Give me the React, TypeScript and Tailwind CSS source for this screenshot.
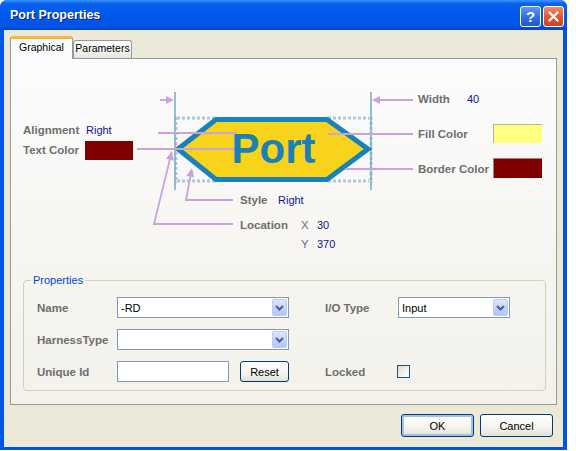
import React from "react";

function Chevron() {
  return (
    <svg width="9" height="6" viewBox="0 0 9 6">
      <path d="M1 1 L4.5 4.5 L8 1" fill="none" stroke="#4D6185" strokeWidth="2" />
    </svg>
  );
}

function Combo({ value, w }: { value: string; w: string }) {
  return (
    <div className={`${w} h-[21px] border border-[#7F9DB9] bg-white flex items-center`}>
      <span className="flex-1 pl-[3px] text-[11px] leading-[14px] text-black">{value}</span>
      <div className="w-[15px] h-[17px] mr-[1px] rounded-[2px] border border-[#B9CCF3] bg-[linear-gradient(180deg,#DCE6FC_0%,#C3D3FB_50%,#B3C7F5_100%)] flex items-center justify-center">
        <Chevron />
      </div>
    </div>
  );
}

const lab = "absolute leading-[14px] text-[11.5px] font-bold text-[#6E6E6E] whitespace-nowrap";
const val = "absolute leading-[14px] text-[11px] text-[#14148A] whitespace-nowrap";

export default function App() {
  const pink = "#C9A3DB";
  return (
    <div className="w-[576px] h-[451px] bg-white font-['Liberation_Sans',Arial,sans-serif]">
      <div className="w-[567px] h-[450px] rounded-t-[7px] bg-[#0055E5] flex flex-col overflow-hidden">
        {/* Title bar */}
        <div className="h-[30px] flex items-center pl-[10px] pr-[3px] bg-[linear-gradient(180deg,#3D95FF_0%,#0A62EC_12%,#0058EE_45%,#0055E5_85%,#0046D2_100%)]">
          <span className="text-white font-bold text-[12.5px] leading-[16px] [text-shadow:1px_1px_0_#0A1883]">
            Port Properties
          </span>
          <div className="ml-auto flex gap-[2px] mt-[2px]">
            <div className="w-[21px] h-[21px] rounded-[3px] border border-white bg-[linear-gradient(180deg,#5B97F7_0%,#2D69E6_60%,#2058D8_100%)] flex items-center justify-center text-white font-bold text-[15px] leading-none">
              ?
            </div>
            <div className="w-[21px] h-[21px] rounded-[3px] border border-white bg-[linear-gradient(180deg,#EE8A66_0%,#E0552F_55%,#CE4422_100%)] flex items-center justify-center">
              <svg width="11" height="11" viewBox="0 0 11 11">
                <path d="M1.5 1.5 L9.5 9.5 M9.5 1.5 L1.5 9.5" stroke="white" strokeWidth="2.2" strokeLinecap="round" />
              </svg>
            </div>
          </div>
        </div>

        {/* Client */}
        <div className="flex-1 mx-[4px] mb-[3px] bg-[#ECE9D8] flex flex-col">
          {/* Tabs */}
          <div className="mt-[6px] pl-[6px] h-[22px] flex items-end">
            <div className="relative z-10 w-[63px] h-[23px] -mb-px rounded-t-[3px] border-x border-[#919B9C] border-t-[3px] border-t-[#F9B83A] bg-[#FCFCFE] flex justify-center pt-[1px]">
              <span className="text-[10.5px] leading-[14px] text-black">Graphical</span>
            </div>
            <div className="w-[59px] h-[18px] rounded-t-[3px] border border-b-0 border-[#919B9C] bg-[linear-gradient(180deg,#FFFFFF_0%,#F3F2EC_60%,#E6E4DB_100%)] flex justify-center">
              <span className="text-[10.5px] leading-[14px] text-black">Parameters</span>
            </div>
          </div>

          {/* Panel */}
          <div className="ml-[6px] w-[547px] h-[347px] border border-[#919B9C] bg-[linear-gradient(180deg,#FCFCFE_0%,#F7F6F2_50%,#F3F1EA_100%)]">
            {/* Diagram */}
            <div className="relative h-[214px]">
              <svg className="absolute left-0 top-0" width="545" height="214" viewBox="11 59 545 214">
                {/* dotted bounding */}
                <g stroke="#AEC8DC" strokeWidth="3" strokeDasharray="3 2" fill="none">
                  <line x1="177" y1="118" x2="216" y2="118" />
                  <line x1="328" y1="118" x2="369" y2="118" />
                  <line x1="177" y1="181" x2="216" y2="181" />
                  <line x1="328" y1="181" x2="369" y2="181" />
                  <line x1="176" y1="117" x2="176" y2="183" />
                  <line x1="371" y1="117" x2="371" y2="183" />
                </g>
                {/* vertical lines */}
                <line x1="175" y1="92" x2="175" y2="190" stroke="#7DAFC6" strokeWidth="1.6" />
                <line x1="371" y1="92" x2="371" y2="190" stroke="#7DAFC6" strokeWidth="1.6" />
                {/* hexagon */}
                <polygon
                  points="178,149 216,119.5 327,119.5 368,149 327,179.5 216,179.5"
                  fill="#F7D31C"
                  stroke="#1A82BA"
                  strokeWidth="5"
                  strokeLinejoin="miter"
                />
                {/* pink lines behind text */}
                <g stroke={pink} strokeWidth="1.8" fill="none">
                  <line x1="158" y1="133" x2="236" y2="133" />
                  <line x1="137" y1="149" x2="236" y2="149" />
                  <line x1="328" y1="134" x2="413" y2="134" />
                  <line x1="345" y1="169" x2="413" y2="169" />
                  <line x1="160" y1="100" x2="167" y2="100" />
                  <line x1="379" y1="100" x2="413" y2="100" />
                  <polyline points="233,200 186,200 190.3,176.8" />
                  <polyline points="233,224 154,224 169.8,159.7" />
                </g>
                <g fill={pink}>
                  <polygon points="174,100 166,96 166,104" />
                  <polygon points="372,100 380,96 380,104" />
                  <polygon points="192,168 194.2,177.5 186.4,176.1" />
                  <polygon points="172,151 173.7,160.7 165.9,158.7" />
                </g>
                <text
                  x="273.5"
                  y="163"
                  textAnchor="middle"
                  fontFamily="'Liberation Sans', Arial, sans-serif"
                  fontWeight="bold"
                  fontSize="42"
                  fill="#1A80B8"
                >
                  Port
                </text>
              </svg>

              <span className={`${lab} left-[12px] top-[64px]`}>Alignment</span>
              <span className={`${val} left-[75px] top-[64px]`}>Right</span>

              <span className={`${lab} left-[12px] top-[84px]`}>Text Color</span>
              <div className="absolute left-[74px] top-[82px] w-[48px] h-[19px] bg-[#800000]" />

              <span className={`${lab} left-[407px] top-[33px]`}>Width</span>
              <span className={`${val} left-[456px] top-[33px]`}>40</span>

              <span className={`${lab} left-[407px] top-[68px]`}>Fill Color</span>
              <div className="absolute left-[482px] top-[65px] w-[49px] h-[19px] bg-[#FFFF80] border-l border-t border-[#B5B59A]" />

              <span className={`${lab} left-[407px] top-[103px]`}>Border Color</span>
              <div className="absolute left-[482px] top-[99px] w-[49px] h-[20px] bg-[#800000] border-l border-t border-[#A08080]" />

              <span className={`${lab} left-[229px] top-[134px]`}>Style</span>
              <span className={`${val} left-[267px] top-[134px]`}>Right</span>

              <span className={`${lab} left-[229px] top-[159px]`}>Location</span>
              <span className={`${lab} left-[290px] top-[159px] font-normal`}>X</span>
              <span className={`${val} left-[306px] top-[159px]`}>30</span>
              <span className={`${lab} left-[290px] top-[178px] font-normal`}>Y</span>
              <span className={`${val} left-[306px] top-[178px]`}>370</span>
            </div>

            {/* Properties group */}
            <fieldset className="ml-[12px] w-[523px] h-[118px] border border-[#D0D0BF] rounded-[4px] p-0 m-0">
              <legend className="ml-[7px] px-[2px] text-[11px] leading-[14px] text-[#0046D5]">Properties</legend>
              <div className="pl-[13px] pt-[10px] flex flex-col gap-[11px]">
                <div className="flex items-center h-[21px]">
                  <span className="w-[80px] text-[11.5px] font-bold text-[#6E6E6E] leading-[14px]">Name</span>
                  <Combo value="-RD" w="w-[172px]" />
                  <span className="ml-[36px] w-[73px] text-[11.5px] font-bold text-[#6E6E6E] leading-[14px]">I/O Type</span>
                  <Combo value="Input" w="w-[112px]" />
                </div>
                <div className="flex items-center h-[21px]">
                  <span className="w-[80px] text-[11.5px] font-bold text-[#6E6E6E] leading-[14px]">HarnessType</span>
                  <Combo value="" w="w-[172px]" />
                </div>
                <div className="flex items-center h-[21px]">
                  <span className="w-[80px] text-[11.5px] font-bold text-[#6E6E6E] leading-[14px]">Unique Id</span>
                  <div className="w-[112px] h-[21px] border border-[#7F9DB9] bg-white" />
                  <div className="ml-[11px] w-[49px] h-[21px] rounded-[3px] border border-[#003C74] bg-[linear-gradient(180deg,#FFFFFF_0%,#F4F3EE_60%,#E2E0D6_100%)] flex items-center justify-center text-[11px] leading-[14px] text-black">
                    Reset
                  </div>
                  <span className="ml-[36px] w-[72px] text-[11.5px] font-bold text-[#6E6E6E] leading-[14px]">Locked</span>
                  <div className="w-[13px] h-[13px] border border-[#1C5180] bg-[linear-gradient(135deg,#DCDCD7_0%,#F2F2EE_60%,#FFFFFF_100%)]" />
                </div>
              </div>
            </fieldset>
          </div>

          {/* Buttons */}
          <div className="mt-[9px] pr-[10px] flex justify-end gap-[6px]">
            <div className="w-[73px] h-[23px] rounded-[3px] border border-[#003C74] bg-[linear-gradient(180deg,#FFFFFF_0%,#F4F3EE_60%,#E2E0D6_100%)] shadow-[inset_0_0_0_2px_#A3BFEE] flex items-center justify-center text-[11px] leading-[14px] text-black">
              OK
            </div>
            <div className="w-[73px] h-[23px] rounded-[3px] border border-[#003C74] bg-[linear-gradient(180deg,#FFFFFF_0%,#F4F3EE_60%,#E2E0D6_100%)] flex items-center justify-center text-[11px] leading-[14px] text-black">
              Cancel
            </div>
          </div>
        </div>
      </div>
    </div>
  );
}
